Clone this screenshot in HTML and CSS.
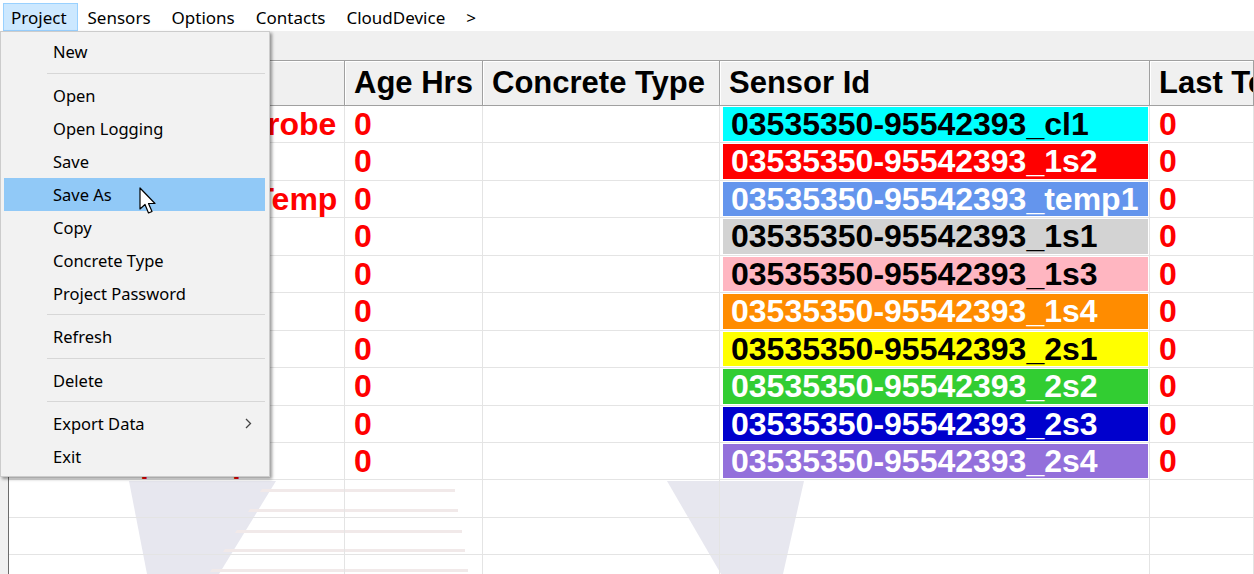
FILE: index.html
```html
<!DOCTYPE html>
<html lang="en">

<head>
  <meta charset="UTF-8">
  <meta name="viewport" content="width=device-width, initial-scale=1.0">
  <title>Project</title>
  <link rel="stylesheet" href="styles.css">
</head>

<body>
  <div class="menubar">
    <div class="item open">Project</div>
    <div class="item">Sensors</div>
    <div class="item">Options</div>
    <div class="item">Contacts</div>
    <div class="item">CloudDevice</div>
    <div class="item">&gt;</div>
  </div>
  <div class="toolstrip"></div>

  <div class="grid">
    <svg class="watermark" viewBox="9 61 1245 513" width="1245" height="513">
      <polygon points="129,481 276,481 219,574 147,574" fill="#e7e7ef" />
      <g fill="#f1e9e9">
        <polygon points="262,489 455,489 455,492 260,492" />
        <polygon points="250,509 458,509 458,512 248,512" />
        <polygon points="237,530 462,530 462,533 235,533" />
        <polygon points="225,549 465,549 465,552 223,552" />
        <polygon points="212,569 468,569 468,572 210,572" />
      </g>
      <polygon points="667,481 804,481 783,574 721,574" fill="#e7e7ef" />
    </svg>

    <div class="row head">
      <div class="cell"></div>
      <div class="cell">Age Hrs</div>
      <div class="cell">Concrete Type</div>
      <div class="cell">Sensor Id</div>
      <div class="cell">Last Temp</div>
    </div>

    <div class="row data">
      <div class="cell red">Maturity Meter Probe</div>
      <div class="cell red">0</div>
      <div class="cell"></div>
      <div class="cell sensor"><div class="tag cyan">03535350-95542393_cl1</div></div>
      <div class="cell red">0</div>
    </div>
    <div class="row data">
      <div class="cell red">Slab 1</div>
      <div class="cell red">0</div>
      <div class="cell"></div>
      <div class="cell sensor"><div class="tag red-bg">03535350-95542393_1s2</div></div>
      <div class="cell red">0</div>
    </div>
    <div class="row data">
      <div class="cell red">Ambient Room Temp</div>
      <div class="cell red">0</div>
      <div class="cell"></div>
      <div class="cell sensor"><div class="tag cornflower">03535350-95542393_temp1</div></div>
      <div class="cell red">0</div>
    </div>
    <div class="row data">
      <div class="cell red">Slab 1</div>
      <div class="cell red">0</div>
      <div class="cell"></div>
      <div class="cell sensor"><div class="tag grey">03535350-95542393_1s1</div></div>
      <div class="cell red">0</div>
    </div>
    <div class="row data">
      <div class="cell red">Slab 3</div>
      <div class="cell red">0</div>
      <div class="cell"></div>
      <div class="cell sensor"><div class="tag pink">03535350-95542393_1s3</div></div>
      <div class="cell red">0</div>
    </div>
    <div class="row data">
      <div class="cell red">Slab 4</div>
      <div class="cell red">0</div>
      <div class="cell"></div>
      <div class="cell sensor"><div class="tag orange">03535350-95542393_1s4</div></div>
      <div class="cell red">0</div>
    </div>
    <div class="row data">
      <div class="cell red">Wall 1</div>
      <div class="cell red">0</div>
      <div class="cell"></div>
      <div class="cell sensor"><div class="tag yellow">03535350-95542393_2s1</div></div>
      <div class="cell red">0</div>
    </div>
    <div class="row data">
      <div class="cell red">Wall 2</div>
      <div class="cell red">0</div>
      <div class="cell"></div>
      <div class="cell sensor"><div class="tag green">03535350-95542393_2s2</div></div>
      <div class="cell red">0</div>
    </div>
    <div class="row data">
      <div class="cell red">Wall 3</div>
      <div class="cell red">0</div>
      <div class="cell"></div>
      <div class="cell sensor"><div class="tag blue">03535350-95542393_2s3</div></div>
      <div class="cell red">0</div>
    </div>
    <div class="row data">
      <div class="cell red">Deck Top Temp</div>
      <div class="cell red">0</div>
      <div class="cell"></div>
      <div class="cell sensor"><div class="tag purple">03535350-95542393_2s4</div></div>
      <div class="cell red">0</div>
    </div>

    <div class="row empty">
      <div class="cell"></div><div class="cell"></div><div class="cell"></div><div class="cell"></div><div class="cell"></div>
    </div>
    <div class="row empty">
      <div class="cell"></div><div class="cell"></div><div class="cell"></div><div class="cell"></div><div class="cell"></div>
    </div>
    <div class="row empty">
      <div class="cell"></div><div class="cell"></div><div class="cell"></div><div class="cell"></div><div class="cell"></div>
    </div>
  </div>

  <div class="dropdown">
    <div class="mi">New</div>
    <div class="sep"></div>
    <div class="mi">Open</div>
    <div class="mi">Open Logging</div>
    <div class="mi">Save</div>
    <div class="mi hover">Save As</div>
    <div class="mi">Copy</div>
    <div class="mi">Concrete Type</div>
    <div class="mi">Project Password</div>
    <div class="sep"></div>
    <div class="mi">Refresh</div>
    <div class="sep"></div>
    <div class="mi">Delete</div>
    <div class="sep"></div>
    <div class="mi">Export Data
      <svg class="chevron" width="7" height="11" viewBox="0 0 7 11"><polyline points="1,1 5.5,5.5 1,10" fill="none" stroke="#444" stroke-width="1.3" /></svg>
    </div>
    <div class="mi">Exit</div>
  </div>

  <svg class="cursor" width="19" height="28" viewBox="0 0 19 28">
    <path d="M1 1 L1 22 L6 17.5 L9.5 26 L13 24.5 L9.5 16.5 L16 16.5 Z" fill="#fff" stroke="#000" stroke-width="1.2" stroke-linejoin="round" />
  </svg>
</body>

</html>
```

FILE: styles.css
```css
* {
  box-sizing: border-box;
}

body {
  margin: 0;
  width: 1254px;
  height: 574px;
  overflow: hidden;
  position: relative;
  background-color: #f0f0f0;
  font-family: "Noto Sans", sans-serif;
  color: #000;
}

/* menu strip */
.menubar {
  height: 31px;
  background-color: #fff;
  display: flex;
  align-items: flex-end;
  padding-left: 3px;
  font-size: 17px;
}
.menubar .item {
  height: 28px;
  display: flex;
  align-items: center;
  padding: 0 10px 0 7px;
  border: 1px solid transparent;
}
.menubar .item + .item {
  padding-left: 9px;
}
.menubar .item.open {
  background-color: #cce8ff;
  border-color: #99d1ff;
}

.toolstrip {
  height: 29px;
}

/* data grid */
.grid {
  position: relative;
  margin-left: 8px;
  height: 514px;
  border-top: 1px solid #a0a0a0;
  border-left: 1px solid #6b6b6b;
  background-color: #fff;
  font-family: "Liberation Sans", Arial, sans-serif;
  font-weight: bold;
  font-size: 32px;
  overflow: hidden;
}
.watermark {
  position: absolute;
  left: 0;
  top: 0;
}
.row {
  position: relative;
  display: grid;
  grid-template-columns: 336px 138px 237px 430px 1fr;
  height: 37.44px;
}
.row.data {
  background-color: #fff;
}
.cell {
  border-right: 1px solid #e4e4e4;
  border-bottom: 1px solid #e4e4e4;
  padding-left: 9px;
  line-height: 36px;
  white-space: nowrap;
  overflow: hidden;
}
.head {
  height: 45px;
  background-color: #f0f0f0;
  font-size: 31px;
}
.head .cell {
  border-right: 1px solid #a0a0a0;
  border-bottom: 1px solid #a0a0a0;
  box-shadow: inset 1px 1px 0 #fff;
  line-height: 44px;
}
.red {
  color: #ff0000;
}

.sensor {
  padding: 1px 1px 1px 3px;
}
.tag {
  height: 100%;
  padding-left: 8px;
  line-height: 34px;
}
.cyan { background-color: #00ffff; color: #000; }
.red-bg { background-color: #ff0000; color: #fff; }
.cornflower { background-color: #6495ed; color: #fff; }
.grey { background-color: #d3d3d3; color: #000; }
.pink { background-color: #ffb6c1; color: #000; }
.orange { background-color: #ff8c00; color: #fff; }
.yellow { background-color: #ffff00; color: #000; }
.green { background-color: #32cd32; color: #fff; }
.blue { background-color: #0000cd; color: #fff; }
.purple { background-color: #9370db; color: #fff; }

/* project dropdown */
.dropdown {
  position: absolute;
  left: 0;
  top: 31px;
  width: 270px;
  padding: 3px 4px 3px 3px;
  background-color: #f2f2f2;
  border: 1px solid #cccccc;
  box-shadow: 2px 2px 3px rgba(0, 0, 0, 0.4);
  font-size: 16.5px;
}
.mi {
  position: relative;
  height: 33px;
  display: flex;
  align-items: center;
  padding-left: 49px;
}
.mi.hover {
  background-color: #91c9f7;
}
.sep {
  height: 10.5px;
  margin-left: 43px;
  display: flex;
  align-items: center;
}
.sep::after {
  content: "";
  flex: 1;
  height: 1px;
  background-color: #d7d7d7;
}
.chevron {
  position: absolute;
  right: 13px;
  top: 11px;
}

.cursor {
  position: absolute;
  left: 139px;
  top: 187px;
}
```
